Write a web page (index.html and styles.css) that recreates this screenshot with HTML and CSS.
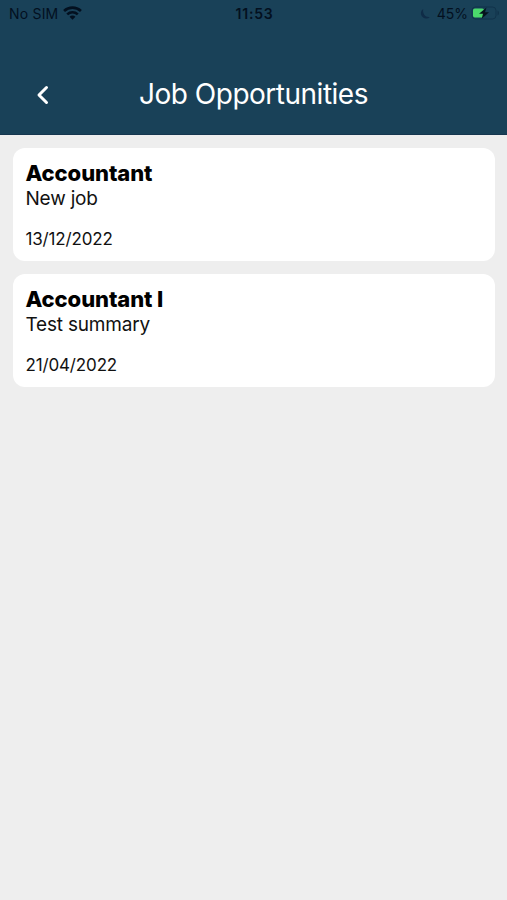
FILE: index.html
```html
<!DOCTYPE html>
<html lang="en">
<head>
    <meta charset="UTF-8">
    <meta name="viewport" content="width=device-width, initial-scale=1.0">
    <title>Job Opportunities</title>
    <link rel="stylesheet" href="styles.css">
</head>
<body>
    <header class="header">
        <div class="status-bar">
            <div class="status-left">
                <span class="carrier">No SIM</span>
                <svg class="wifi" width="19" height="14" viewBox="0 0 18 13" fill="none" stroke="#03101f" stroke-width="2.5">
                    <path d="M1 4.600C5.600.3 12.400.3 17 4.600"/>
                    <path d="M4 7.800c2.900-2.700 7.100-2.700 10 0"/>
                    <path d="M9 12.800L6.200 10c1.600-1.400 4-1.400 5.600 0z" fill="#03101f" stroke="none"/>
                </svg>
            </div>
            <span class="clock">11:53</span>
            <div class="status-right">
                <svg class="moon" width="11" height="12" viewBox="0 0 11 12">
                    <path d="M3.200 1C.9 2.400.3 5.400 1.500 7.800c1.500 2.900 5.800 3.600 8.300 1.100C5.500 9.600 2.400 6 3.200 1z" fill="#0f2c47"/>
                </svg>
                <span class="percent">45%</span>
                <svg class="battery" width="29" height="14" viewBox="0 0 29 14">
                    <rect x="1" y="1" width="24" height="12" rx="3.500" fill="none" stroke="#11334a"/>
                    <path d="M26.500 4.500c2 .8 2 4.200 0 5z" fill="#11334a"/>
                    <rect x="2" y="2.500" width="11" height="9" rx="1.800" fill="#4bd86c"/>
                    <path d="M15.500 1.500L8 7.700h4l-1.300 5L18 6.300h-4z" fill="#05131d"/>
                </svg>
            </div>
        </div>
        <div class="nav-bar">
            <button class="back" aria-label="Back">
                <svg width="14" height="20" viewBox="0 0 14 20" fill="none" stroke="#fff" stroke-width="3" stroke-linecap="round" stroke-linejoin="round">
                    <path d="M11.500 2.500L4 10l7.500 7.500"/>
                </svg>
            </button>
            <h1 class="title">Job Opportunities</h1>
        </div>
    </header>

    <main class="job-list">
        <article class="job-card">
            <h2 class="job-title">Accountant</h2>
            <p class="job-summary">New job</p>
            <p class="job-date">13/12/2022</p>
        </article>
        <article class="job-card">
            <h2 class="job-title">Accountant I</h2>
            <p class="job-summary">Test summary</p>
            <p class="job-date">21/04/2022</p>
        </article>
    </main>
</body>
</html>
```
FILE: styles.css
```css
* {
    box-sizing: border-box;
}

body {
    margin: 0;
    min-height: 100vh;
    background: #eee;
    color: #111;
    font-family: Inter, "Liberation Sans", sans-serif;
}

h1, h2, p {
    margin: 0;
}

.header {
    height: 135px;
    background: #194158;
    border-bottom: 1px solid #16364f;
}

.status-bar {
    display: grid;
    grid-template-columns: 1fr auto 1fr;
    align-items: center;
    height: 27px;
    padding: 0 7px 0 9px;
    color: #03101f;
    font-size: 14px;
}

.status-left,
.status-right {
    display: flex;
    align-items: center;
}

.carrier {
    letter-spacing: 0.2px;
}

.wifi {
    margin: -2px 0 0 5px;
}

.clock {
    font-weight: 600;
    letter-spacing: 0.8px;
}

.status-right {
    justify-content: flex-end;
}

.moon {
    margin-right: 6px;
}

.battery {
    margin: -1px 0 0 3px;
}

.nav-bar {
    display: grid;
    grid-template-columns: 84px 1fr 84px;
    align-items: center;
    height: 107px;
    padding-top: 26px;
}

.back {
    display: flex;
    justify-content: center;
    padding: 3px 0 0;
    border: none;
    background: none;
}

.title {
    color: #fff;
    font-size: 28px;
    font-weight: 400;
    letter-spacing: -0.5px;
    text-align: center;
    white-space: nowrap;
}

.job-list {
    display: flex;
    flex-direction: column;
    gap: 13px;
    padding: 13px 12px 0 13px;
}

.job-card {
    height: 113px;
    padding: 12px 12.5px;
    background: #fff;
    border-radius: 12px;
}

.job-title {
    color: #000;
    font-size: 22px;
    font-weight: 800;
    letter-spacing: -0.1px;
    line-height: 26px;
}

.job-summary {
    margin-top: 1px;
    font-size: 19px;
    letter-spacing: -0.2px;
    line-height: 24px;
}

.job-date {
    margin-top: 18px;
    font-size: 17px;
    letter-spacing: -0.15px;
    line-height: 20px;
}
```
